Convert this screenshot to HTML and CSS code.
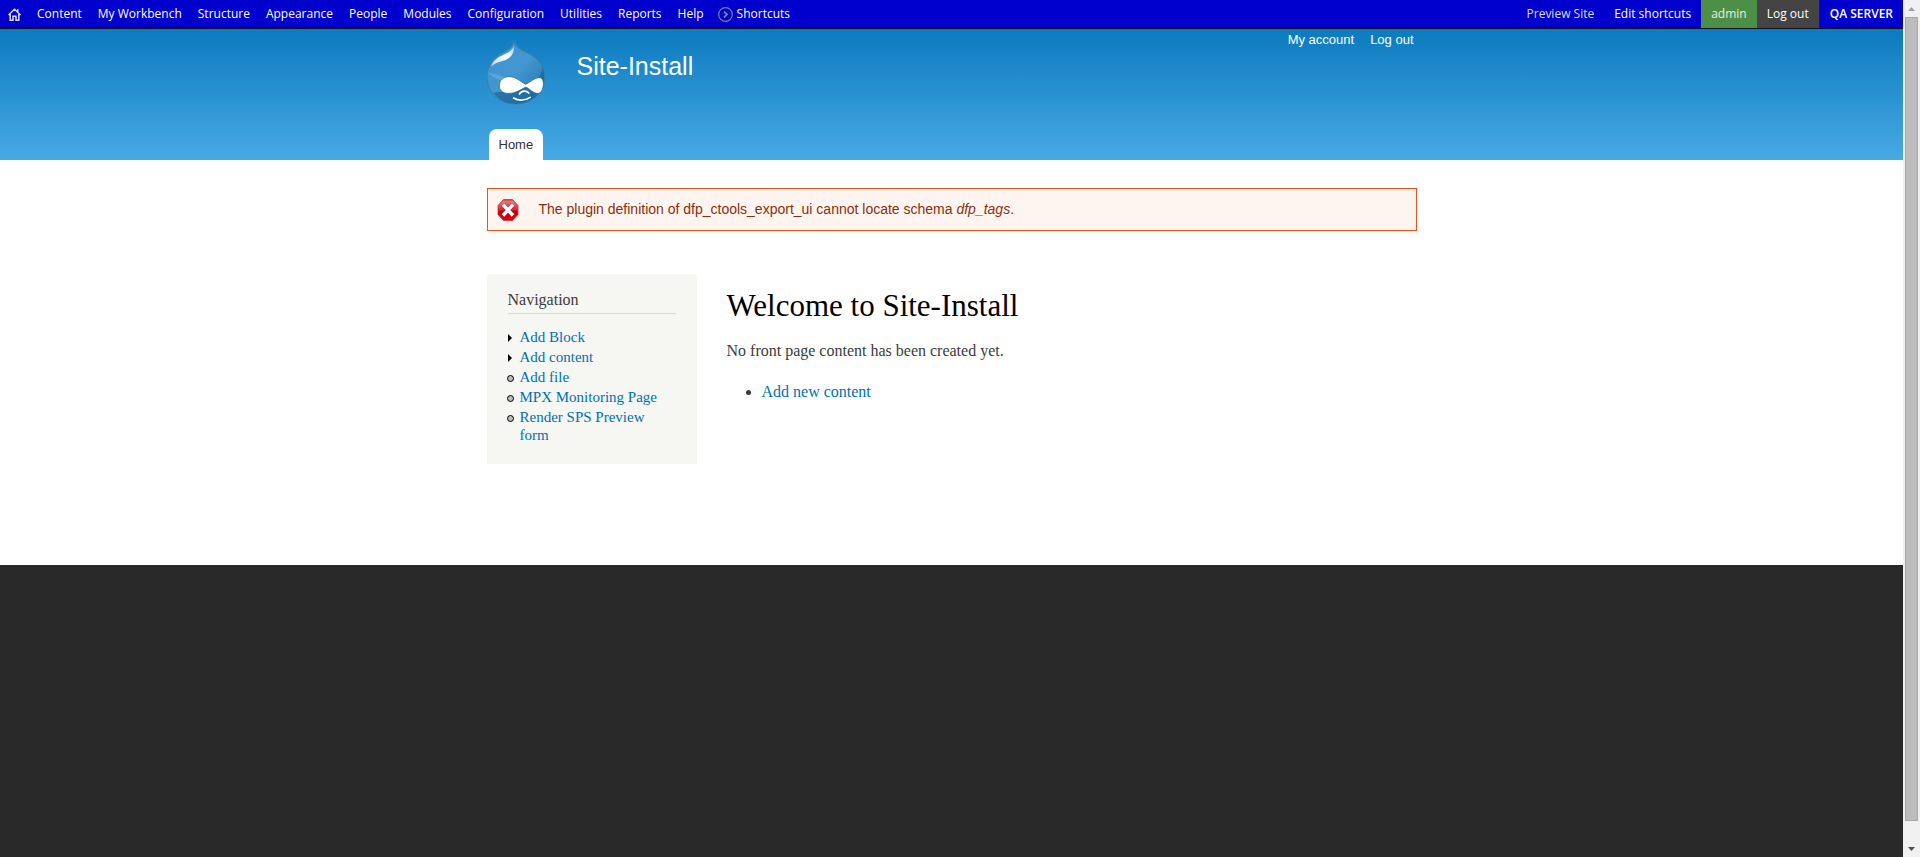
FILE: index.html
```
<!DOCTYPE html>
<html lang="en">
<head>
<meta charset="utf-8">
<title>Welcome to Site-Install | Site-Install</title>
<link rel="stylesheet" href="styles.css">
</head>
<body>
<div class="page">
  <nav class="toolbar" aria-label="Administration">
    <ul class="toolbar-list">
      <li><a class="home-link" href="#" aria-label="Home">
        <svg width="13" height="13" viewBox="0 0 13 13" fill="none" stroke="currentColor" stroke-width="1.5"><path d="M.5 7 6.500 1.200 12.500 7M9.800 1.200V4.500M2.200 6V12.200H5V8.300H8V12.200H10.800V6"/></svg>
      </a></li>
      <li><a href="#">Content</a></li>
      <li><a href="#">My Workbench</a></li>
      <li><a href="#">Structure</a></li>
      <li><a href="#">Appearance</a></li>
      <li><a href="#">People</a></li>
      <li><a href="#">Modules</a></li>
      <li><a href="#">Configuration</a></li>
      <li><a href="#">Utilities</a></li>
      <li><a href="#">Reports</a></li>
      <li><a href="#">Help</a></li>
      <li><a class="shortcuts-link" href="#">
        <svg width="15" height="15" viewBox="0 0 15 15" fill="none" stroke="#7d7d96"><circle cx="7.500" cy="7.500" r="6.800" stroke-width="1.200"/><path d="M6 4.500 9 7.500 6 10.500" stroke-width="1.800"/></svg>Shortcuts</a></li>
    </ul>
    <ul class="toolbar-list toolbar-user">
      <li><a class="dim" href="#">Preview Site</a></li>
      <li><a href="#">Edit shortcuts</a></li>
      <li><a class="account" href="#">admin</a></li>
      <li><a class="logout" href="#">Log out</a></li>
      <li><strong class="server">QA SERVER</strong></li>
    </ul>
  </nav>

  <header class="header">
    <div class="container header-inner">
      <div class="branding">
        <a class="logo" href="#" aria-label="Site-Install home">
          <svg width="58" height="65" viewBox="2 0 168 195" preserveAspectRatio="none">
            <defs>
              <linearGradient id="drop" x1="0" y1="0" x2="1" y2="1"><stop offset="0" stop-color="#3c94cf"/><stop offset=".5" stop-color="#4397cf"/><stop offset="1" stop-color="#1f6fa9"/></linearGradient>
              <linearGradient id="shine" x1="1" y1="0" x2="0" y2="1"><stop offset="0" stop-color="#fff" stop-opacity=".5"/><stop offset=".4" stop-color="#fff"/><stop offset="1" stop-color="#fff" stop-opacity=".6"/></linearGradient>
            </defs>
            <path fill="url(#drop)" stroke="#3d7ea8" stroke-width="3" d="M79 3C86 20 96 28 116 37C146 51 169 76 169 111C169 161 130 192 85 192C39 192 2 159 2 110C2 77 19 55 44 40C66 28 77 19 79 3Z"/>
            <path fill="#186399" opacity=".65" d="M163 80C162 104 144 127 103 140C60 152 33 158 20 158C37 180 58 191 85 191C130 191 168 161 168 111C168 99 167 89 163 80Z"/>
            <path fill="#87c0e6" opacity=".35" d="M5 97C23 119 43 124 63 119C48 105 22 103 5 97Z"/>
            <path fill="url(#shine)" d="M80 19C82 45 64 59 45 64C31 68 20 73 14 80C19 61 34 52 53 43C67 36 76 29 80 19Z"/>
            <path fill="#fff" stroke="#246a9a" stroke-width="2" d="M66 110C86 110 99 125 114 133C128 126 137 115 151 113C162 112 166 121 165 134C164 150 157 161 147 160C134 159 126 146 115 141C99 148 87 160 64 160C46 160 37 149 38 135C39 119 50 110 66 110Z"/>
            <path fill="none" stroke="#fff" stroke-width="5" stroke-linecap="round" d="M96 162C102 151 117 151 123 159M79 174C94 183 114 182 127 172"/>
          </svg>
        </a>
        <a class="site-name" href="#">Site-Install</a>
        <nav class="user-menu" aria-label="User menu">
          <a href="#">My account</a>
          <a href="#">Log out</a>
        </nav>
      </div>
      <nav class="tabs" aria-label="Main menu"><a class="tab" href="#">Home</a></nav>
    </div>
  </header>

  <main class="main">
    <div class="container">
      <div class="message" role="alert">
        <svg width="22" height="24" viewBox="0 0 22 24">
          <defs><linearGradient id="stop" x1="0" y1="0" x2="0" y2="1"><stop offset="0" stop-color="#d9343a"/><stop offset=".1" stop-color="#e5757a"/><stop offset=".5" stop-color="#cf2930"/><stop offset=".55" stop-color="#c4000a"/><stop offset="1" stop-color="#e80008"/></linearGradient></defs>
          <path fill="url(#stop)" stroke="#c7343a" stroke-width=".8" d="M6.500 1.500H15.500L21 7.500V16.500L15.500 22.500H6.500L1 16.500V7.500Z"/>
          <path fill="none" stroke="#a3161c" stroke-width="4.500" d="M6 6.500 16 17.500M16 6.500 6 17.500"/>
          <path fill="none" stroke="#fff" stroke-width="3.500" d="M6 6.500 16 17.500M16 6.500 6 17.500"/>
        </svg>
        <p>The plugin definition of dfp_ctools_export_ui cannot locate schema <em>dfp_tags</em>.</p>
      </div>
      <div class="columns">
        <aside class="sidebar">
          <h2>Navigation</h2>
          <ul class="menu">
            <li class="collapsed"><a href="#">Add Block</a></li>
            <li class="collapsed"><a href="#">Add content</a></li>
            <li class="leaf"><a href="#">Add file</a></li>
            <li class="leaf"><a href="#">MPX Monitoring Page</a></li>
            <li class="leaf"><a href="#">Render SPS Preview form</a></li>
          </ul>
        </aside>
        <section class="content">
          <h1>Welcome to Site-Install</h1>
          <p>No front page content has been created yet.</p>
          <ul class="links"><li><a href="#">Add new content</a></li></ul>
        </section>
      </div>
    </div>
  </main>
</div>
<div class="scrollbar" aria-hidden="true">
  <svg width="17" height="17"><path fill="#a0a0a0" d="M5 11 8.500 7 12 11Z"/></svg>
  <div class="thumb"></div>
  <svg width="17" height="17"><path fill="#505050" d="M5 7H12L8.500 11Z"/></svg>
</div>
</body>
</html>
```
FILE: styles.css
```
* { box-sizing: border-box; }
body {
  margin: 0;
  display: flex;
  height: 100vh;
  background: #292929;
  color: #3b3b3b;
  font-family: Georgia, "Liberation Serif", serif;
  font-size: 15px;
}
ul, p, h1, h2 { margin: 0; padding: 0; }
ul { list-style: none; }
a { color: #0071b3; text-decoration: none; }
svg { display: block; }
.page { flex: 1; min-width: 0; overflow: hidden; }
.container { width: 930px; max-width: 100%; margin: 0 auto; }

.toolbar {
  display: flex;
  justify-content: space-between;
  height: 29px;
  border-bottom: 1px solid #101020;
  background: #0000cd;
  color: #fff;
  font: 12px/28px "Open Sans", sans-serif;
}
.toolbar-list { display: flex; white-space: nowrap; }
.toolbar-list a, .server { display: block; padding: 0 8px; color: #fff; }
.toolbar-user a, .server { padding: 0 10px; }
.toolbar-list .home-link { display: flex; align-items: center; height: 28px; color: #dcdcf5; }
.toolbar-list .shortcuts-link { display: flex; align-items: center; gap: 4px; padding-left: 6px; }
.toolbar-list .dim { color: #dcdcf0; }
.toolbar-list .account { background: #4d8f46; color: #e8f0e8; }
.toolbar-list .logout { background: #444; border-right: 1px solid #222; }
.server { font-weight: 600; }

.header {
  background: linear-gradient(#0c7abf, #48a9e4);
  font-family: "Liberation Sans", sans-serif;
}
.header-inner { display: flex; flex-direction: column; height: 131px; }
.branding { display: flex; align-items: flex-start; }
.logo { padding-top: 11px; }
.site-name { margin-left: 32px; padding-top: 23px; color: #fffeff; font-size: 25px; line-height: 28px; }
.user-menu { display: flex; gap: 16px; margin-left: auto; padding: 3px 3px 0 0; font-size: 13px; line-height: 16px; }
.user-menu a { color: #fff; }
.tabs { display: flex; margin-top: auto; padding-left: 2px; }
.tab { padding: 0 10px; border-radius: 8px 8px 0 0; background: #fff; color: #333; font-size: 13px; line-height: 31px; }

.main { padding: 28px 0 101px; background: #fff; }
.message {
  display: flex;
  align-items: center;
  gap: 20px;
  min-height: 43px;
  padding: 0 9px;
  border: 1px solid #ed541d;
  background: #fef5f1;
  color: #8c2e0b;
  font: 14px/20px "Liberation Sans", sans-serif;
}
.message p { padding-bottom: 2px; }
.columns { display: flex; align-items: flex-start; gap: 30px; padding-top: 43px; }
.sidebar { width: 210px; padding: 16px 21px 20px; background: #f6f6f2; }
.sidebar h2 { padding-bottom: 3px; border-bottom: 1px solid #d6d6d6; font-size: 16px; font-weight: normal; line-height: 20px; }
.menu { display: flex; flex-direction: column; gap: 2px; padding: 14px 0 0 12px; line-height: 18px; }
.menu li { position: relative; }
.menu li::before { content: ""; position: absolute; }
.collapsed::before { left: -12px; top: 6px; border: solid transparent; border-width: 4px 0 4px 4px; border-left-color: #000; }
.leaf::before { left: -13px; top: 7px; width: 5px; height: 5px; border: 1px solid #000; border-radius: 50%; background: #bbb; }
.content { flex: 1; padding-top: 15px; }
.content h1 { color: #000; font-size: 31px; font-weight: normal; line-height: 34px; }
.content p { padding-top: 17px; font-size: 16px; line-height: 22px; }
.links { padding: 19px 0 0 35px; list-style: disc; font-size: 16px; line-height: 22px; }

.scrollbar { display: flex; flex-direction: column; width: 17px; background: #f0f0f0; }
.thumb { flex: 1; margin: 0 2px 19px; border: 1px solid #a8a8a8; background: #bcbcbc; }
```
